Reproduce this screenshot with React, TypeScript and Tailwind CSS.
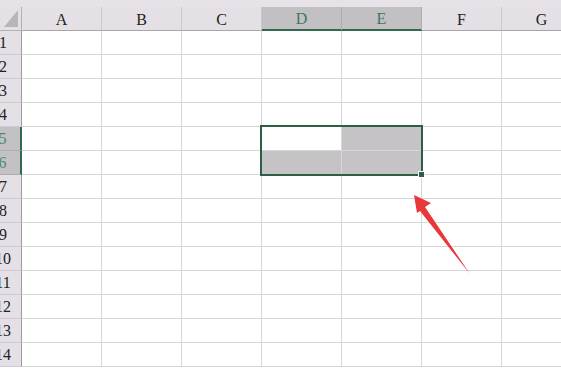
const cols = ["A", "B", "C", "D", "E", "F", "G"];
const rows = Array.from({ length: 14 }, (_, i) => i + 1);

const selCols = ["D", "E"];
const selRows = [5, 6];

function cellBg(col: string, row: number) {
  const inSel = selCols.includes(col) && selRows.includes(row);
  if (!inSel) return "bg-white";
  if (col === "D" && row === 5) return "bg-white";
  return "bg-[#c6c3c7]";
}

export default function App() {
  return (
    <div className="relative w-[561px] h-[369px] overflow-hidden bg-white font-['Liberation_Serif',serif]">
      <div className="h-[7px] bg-[#e6e2e7]" />
      {/* header row */}
      <div className="flex">
        <div className="relative ml-[-15px] w-[37px] h-[24px] shrink-0 bg-[#e4e0e5] border-r border-b border-[#b4b0b4]">
          <svg className="absolute left-[19px] top-[3px]" width="14" height="17" viewBox="0 0 14 17">
            <polygon points="14,0 14,17 0,17" fill="#b9b6ba" />
          </svg>
        </div>
        {cols.map((c) => {
          const sel = selCols.includes(c);
          return (
            <div
              key={c}
              className={
                sel
                  ? "w-[80px] h-[24px] shrink-0 bg-[#c3c0c4] border-r border-[#b0adb1] border-b-2 border-b-[#2f6a4a] text-[#3a7a58] flex justify-center pt-[3px] text-[16px] leading-[18px]"
                  : "w-[80px] h-[24px] shrink-0 bg-[#e4e0e5] border-r border-b border-[#cbc7cc] border-b-[#a9a6aa] text-[#222] flex justify-center pt-[4px] text-[16px] leading-[18px]"
              }
            >
              {c}
            </div>
          );
        })}
      </div>
      {rows.map((r) => {
        const sel = selRows.includes(r);
        return (
          <div key={r} className="flex">
            <div
              className={
                sel
                  ? "ml-[-15px] w-[37px] h-[24px] shrink-0 bg-[#c4c1c5] border-b border-[#b0adb1] border-r-2 border-r-[#2f6a4a] text-[#4a8a70] flex justify-center items-center text-[16px]"
                  : "ml-[-15px] w-[37px] h-[24px] shrink-0 bg-[#e4e0e5] border-b border-[#cfcbd0] border-r border-r-[#9e9b9f] text-[#222] flex justify-center items-center text-[16px]"
              }
            >
              {r}
            </div>
            {cols.map((c) => (
              <div
                key={c}
                className={`w-[80px] h-[24px] shrink-0 border-r border-b border-[#d6d6d6] ${cellBg(c, r)}`}
              />
            ))}
          </div>
        );
      })}
      {/* selection outline */}
      <div className="absolute left-[260px] top-[125px] w-[163px] h-[51px] border-2 border-[#2e5e44]" />
      <div className="absolute left-[418px] top-[171px] w-[7px] h-[7px] bg-[#2e5e44] border border-white" />
      {/* red arrow */}
      <svg className="absolute left-0 top-0" width="561" height="369" viewBox="0 0 561 369">
        <polygon
          points="414,195 431,203 425,207 470,274 420,211 417,213"
          fill="#e8383b"
        />
      </svg>
    </div>
  );
}
